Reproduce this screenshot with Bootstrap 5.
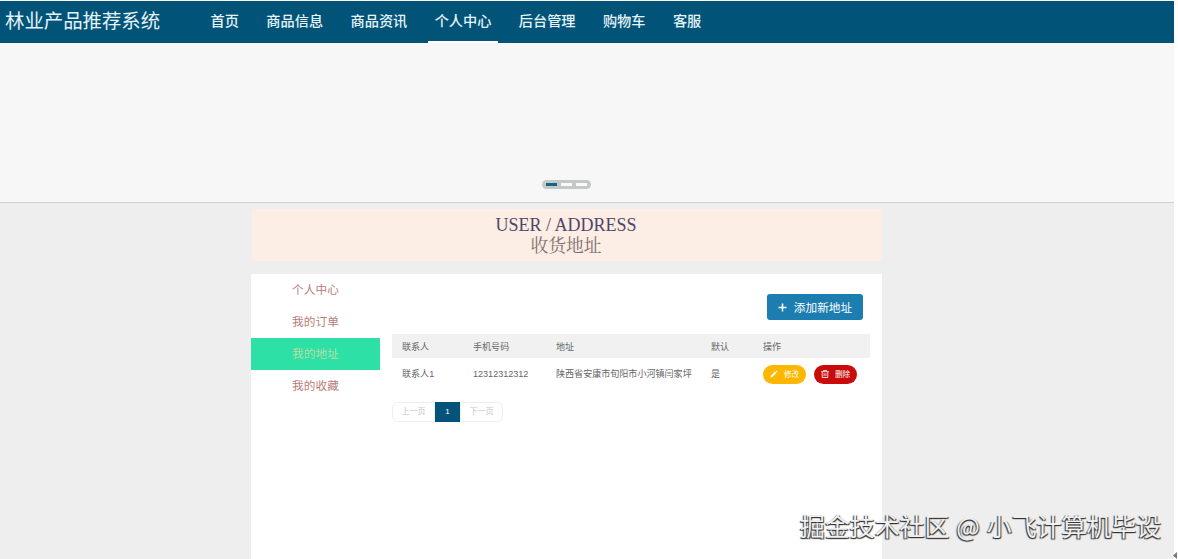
<!DOCTYPE html>
<html lang="zh-CN">
<head>
<meta charset="utf-8">
<meta name="viewport" content="width=device-width, initial-scale=1">
<title>林业产品推荐系统</title>
<link rel="stylesheet" href="https://cdn.jsdelivr.net/npm/bootstrap@5.3.0/dist/css/bootstrap.min.css">
<style>
body{font-family:"Liberation Sans","Noto Sans CJK SC",sans-serif;background:#fff;height:559px;overflow:hidden;color:#666}
.page{width:1174px;height:558px;margin-top:1px;background:#eee}
.topbar{height:42px;background:#015478;padding:0 0 0 5px}
.brand{font-size:19.4px;line-height:40px;width:199px;color:#e6f3f8;white-space:nowrap}
.menu{gap:14.2px}
.menu a{font-size:14.2px;line-height:40px;height:42px;padding:0 6.6px;color:#e6f3f8;font-weight:500;text-decoration:none;white-space:nowrap}
.menu a.active{border-bottom:2px solid #fff}
.banner{height:160px;background:#f7f7f7;border-bottom:1px solid #d0d0d0;padding:0 0 13px}
.dots{width:49px;height:9px;border-radius:5px;background:#c4c8c7;gap:4px;margin-left:-41px}
.dots i{width:11px;height:3px;background:#fafafa}
.dots i.on{background:#176489}
.main{width:631px;margin-left:251px}
.heading{height:52px;margin:6px 0 13px 1px;background:#fcede5;font-family:"Liberation Serif",serif;font-size:18px;line-height:20px;padding:6px 2px 0 0;color:#514667}
.heading .zh{color:#80706f;font-size:17.8px;font-family:"Liberation Serif","Noto Serif CJK SC","Noto Sans CJK SC",serif;padding-top:1px}
.panel{height:285px;background:#fff}
.side{width:129px}
.side a{height:32px;line-height:32px;font-size:11.7px;color:#b97c79;text-decoration:none;text-align:center}
.side a.active{background:#2de0a5;color:#b5dfa6}
.content{width:478px;margin-left:12px;padding-top:20px}
.add{width:96px;height:26px;background:#1b7db0;border-radius:3px;color:#fff;font-size:11.7px;margin-right:7px;gap:7px;white-space:nowrap}
.add span{padding-top:1px}
.grid{margin:14px 0 0;font-size:9.05px;table-layout:fixed;width:478px;line-height:12px}
.grid th,.grid td{padding:0 0 0 10px;font-weight:400;white-space:nowrap;vertical-align:middle;color:#666;border:0}
.grid th{background:#f1f1f1;height:24px;padding-top:2px}
.grid td{height:32px}
.pill{width:43px;height:19px;border-radius:10px;color:#fff;font-size:7.6px;gap:6px;line-height:19px}
.edit{background:#ffb600}.del{background:#c90b0b}
.pages{margin-top:12px;height:20px;font-size:8px;line-height:18px;text-align:center}
.pages span{border:1px solid #eee;color:#c6c6c6;width:43px}
.pages .now{background:#05527a;border-color:#05527a;color:#fff;width:25px}
.watermark{position:absolute;left:800px;top:507px;font-family:"Noto Sans CJK SC",sans-serif;font-size:24.9px;line-height:37px;color:#f0f0f0;white-space:nowrap;word-spacing:1.4px;text-shadow:-1px 1px 1px #333,1px 1px 1px #333}
.ret{position:absolute;left:1173px;top:552px}
</style>
</head>
<body>
<div class="page">
  <nav class="topbar d-flex">
    <div class="brand">林业产品推荐系统</div>
    <div class="menu d-flex"><a href="#">首页</a><a href="#">商品信息</a><a href="#">商品资讯</a><a href="#" class="active">个人中心</a><a href="#">后台管理</a><a href="#">购物车</a><a href="#">客服</a></div>
  </nav>
  <section class="banner d-flex justify-content-center align-items-end">
    <div class="dots d-flex align-items-center justify-content-center"><i class="on"></i><i></i><i></i></div>
  </section>
  <main class="main">
    <div class="heading text-center"><div>USER / ADDRESS</div><div class="zh">收货地址</div></div>
    <div class="panel d-flex">
      <aside class="side d-flex flex-column"><a href="#">个人中心</a><a href="#">我的订单</a><a href="#" class="active">我的地址</a><a href="#">我的收藏</a></aside>
      <section class="content">
        <div class="d-flex justify-content-end">
          <button class="add btn p-0 border-0 d-flex align-items-center justify-content-center"><svg width="9" height="9" viewBox="0 0 9 9"><path d="M4.5 .5v8M.5 4.5h8" stroke="#fff" stroke-width="1.6"/></svg><span>添加新地址</span></button>
        </div>
        <table class="grid">
          <colgroup><col style="width:71px"><col style="width:83px"><col style="width:155px"><col style="width:52px"><col style="width:117px"></colgroup>
          <thead><tr><th>联系人</th><th>手机号码</th><th>地址</th><th>默认</th><th>操作</th></tr></thead>
          <tbody><tr><td>联系人1</td><td>12312312312</td><td>陕西省安康市旬阳市小河镇闫家坪</td><td>是</td>
            <td><div class="d-flex" style="gap:8px">
              <span class="pill edit d-flex align-items-center justify-content-center"><svg width="8" height="8" viewBox="0 0 8 8"><path d="M.3 7.7 1 5.6 5 1.6 6.4 3 2.4 7ZM5.5 1.1 6.2.4 7.6 1.8 6.9 2.5Z" fill="#fff"/></svg>修改</span>
              <span class="pill del d-flex align-items-center justify-content-center"><svg width="8" height="8" viewBox="0 0 8 8"><path d="M0 1.7h8M2.5 1.5V.5h3v1M1.2 2v5.5h5.6V2M3.1 3.2v3M4.9 3.2v3" fill="none" stroke="#fff" stroke-width=".8"/></svg>删除</span>
            </div></td></tr></tbody>
        </table>
        <div class="pages d-flex"><span class="rounded-start">上一页</span><span class="now">1</span><span class="rounded-end">下一页</span></div>
      </section>
    </div>
  </main>
</div>
<div class="watermark">掘金技术社区 @ 小飞计算机毕设</div>
<svg class="ret" width="5" height="7" viewBox="0 0 5 7"><path d="M4 0v7L0 3.5Z" fill="#777"/></svg>
<script src="https://cdn.jsdelivr.net/npm/bootstrap@5.3.0/dist/js/bootstrap.bundle.min.js"></script>
</body>
</html>
